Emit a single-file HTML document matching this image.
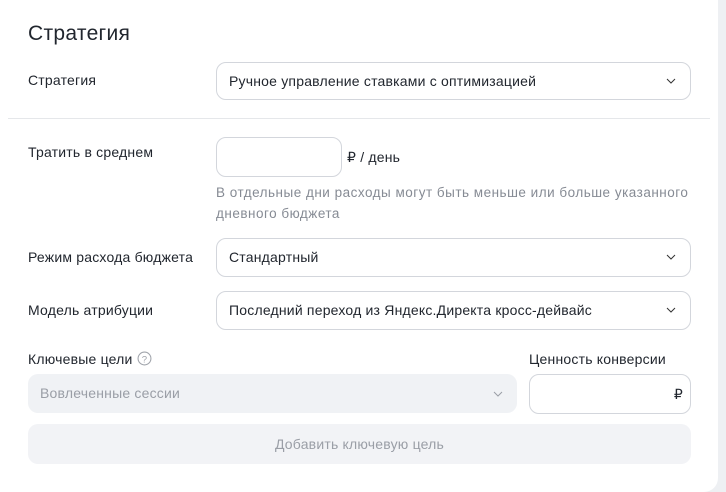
<!DOCTYPE html><html><head><meta charset="utf-8"><style>
body{margin:0;width:726px;height:492px;background:#eef0f3;font-family:"Liberation Sans",sans-serif;color:#21262e;overflow:hidden;position:relative}
.card{position:absolute;left:0;top:0;width:718px;height:492px;background:#fff;border-radius:0 0 14px 0}
.a{position:absolute;white-space:nowrap}
.lbl{font-size:14px;letter-spacing:0.2px}
.box{position:absolute;border:1px solid #d3d6dc;border-radius:10px;box-sizing:border-box;background:#fff}
.sel{font-size:14px;letter-spacing:0.2px;padding-left:12px;line-height:36px}
.chev{position:absolute;right:14px;top:14px;width:10px;height:8px}
</style></head><body><div class="card">
<div class="a" style="left:28px;top:22px;font-size:21px;letter-spacing:0.3px">Стратегия</div>
<div class="a lbl" style="left:28px;top:72px">Стратегия</div>
<div class="box sel" style="left:216px;top:62px;width:475px;height:38px">Ручное управление ставками с оптимизацией<svg class="chev" viewBox="0 0 10 6"><path d="M1 1l4 4 4-4" fill="none" stroke="#333" stroke-width="1"/></svg></div>
<div style="position:absolute;left:8px;top:118px;width:702px;height:1px;background:#e5e7ea"></div>
<div class="a lbl" style="left:28px;top:144px">Тратить в среднем</div>
<div class="box" style="left:216px;top:137px;width:126px;height:40px"></div>
<div class="a lbl" style="left:347px;top:149px">₽ / день</div>
<div class="a" style="left:216px;top:182px;font-size:13.5px;color:#868b94;line-height:21px;letter-spacing:0.5px">В отдельные дни расходы могут быть меньше или больше указанного<br>дневного бюджета</div>
<div class="a lbl" style="left:28px;top:249px">Режим расхода бюджета</div>
<div class="box sel" style="left:216px;top:238px;width:475px;height:39px">Стандартный<svg class="chev" viewBox="0 0 10 6"><path d="M1 1l4 4 4-4" fill="none" stroke="#333" stroke-width="1"/></svg></div>
<div class="a lbl" style="left:28px;top:302px">Модель атрибуции</div>
<div class="box sel" style="left:216px;top:291px;width:475px;height:39px">Последний переход из Яндекс.Директа кросс-дейвайс<svg class="chev" viewBox="0 0 10 6"><path d="M1 1l4 4 4-4" fill="none" stroke="#333" stroke-width="1"/></svg></div>
<div class="a lbl" style="left:28px;top:351px">Ключевые цели <svg width="15" height="15" viewBox="0 0 14 14" style="vertical-align:-2px"><circle cx="7" cy="7" r="6" fill="none" stroke="#a0a4ab"/><text x="7" y="10.5" font-size="9" text-anchor="middle" fill="#a0a4ab" font-family="Liberation Sans">?</text></svg></div>
<div class="a lbl" style="left:529px;top:351px">Ценность конверсии</div>
<div class="a sel" style="left:28px;top:374px;width:489px;height:39px;box-sizing:border-box;background:#f0f2f5;border-radius:10px;color:#9a9ea6;line-height:39px">Вовлеченные сессии<svg class="chev" viewBox="0 0 10 6" style="top:16px"><path d="M1 1l4 4 4-4" fill="none" stroke="#9a9ea6" stroke-width="1"/></svg></div>
<div class="box" style="left:529px;top:374px;width:162px;height:40px"><span class="a lbl" style="right:7px;top:11px">₽</span></div>
<div class="a" style="left:28px;top:424px;width:663px;height:40px;background:#f2f3f6;border-radius:10px;text-align:center;line-height:40px;font-size:14px;color:#9a9ea6;letter-spacing:0.2px">Добавить ключевую цель</div>
</div></body></html>
